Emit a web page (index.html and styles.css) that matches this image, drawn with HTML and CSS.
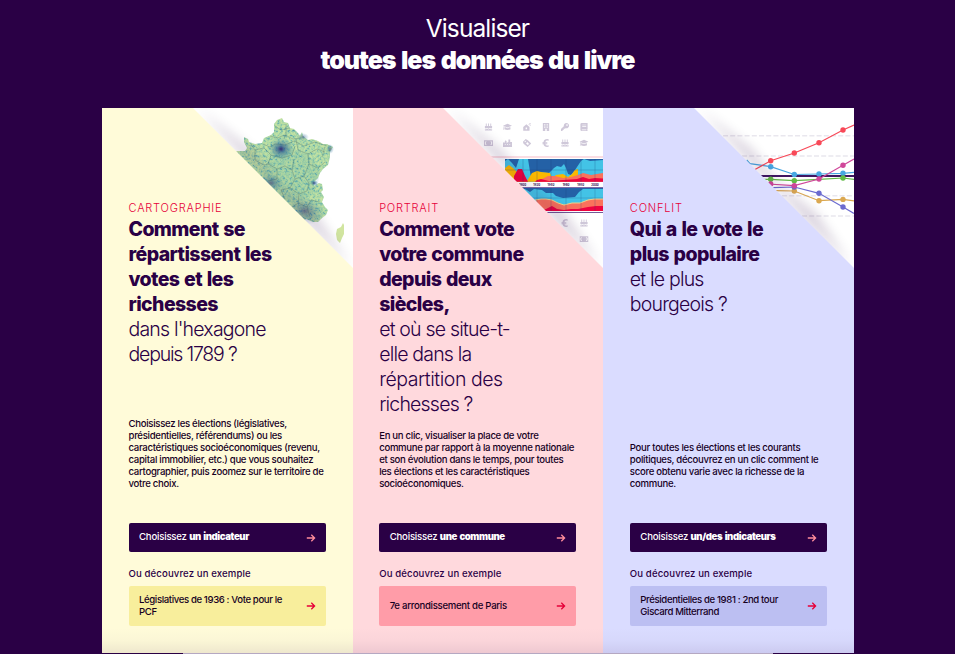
FILE: index.html
```html
<!DOCTYPE html>
<html lang="fr">
<head>
<meta charset="utf-8">
<title>Visualiser toutes les données du livre</title>
<link rel="stylesheet" href="styles.css">
</head>
<body>
<svg class="defs" width="0" height="0" aria-hidden="true">
  <defs>
    <filter id="blur" x="-30%" y="-30%" width="160%" height="160%"><feGaussianBlur stdDeviation="6"/></filter>
    <filter id="density" x="0" y="0" width="100%" height="100%" color-interpolation-filters="sRGB">
      <feTurbulence type="fractalNoise" baseFrequency="0.4" numOctaves="3" seed="7" result="n"/>
      <feColorMatrix in="n" type="matrix" values="1.5 0 0 0 -0.1  1.5 0 0 0 -0.1  1.5 0 0 0 -0.1  0 0 0 0 1"/>
      <feComponentTransfer result="c">
        <feFuncR type="table" tableValues="0.28 0.42 0.62 0.72 0.78"/>
        <feFuncG type="table" tableValues="0.54 0.70 0.82 0.87 0.89"/>
        <feFuncB type="table" tableValues="0.66 0.68 0.66 0.64 0.64"/>
      </feComponentTransfer>
      <feComposite in="c" in2="SourceGraphic" operator="in"/>
    </filter>
    <radialGradient id="city"><stop offset="0" stop-color="#352a75"/><stop offset=".3" stop-color="#2f5b92" stop-opacity=".7"/><stop offset="1" stop-color="#3b8aa3" stop-opacity="0"/></radialGradient>
    <symbol id="cake" viewBox="0 0 10 10"><path d="M2 1h1v3H2zM4.500 1h1v3h-1zM7 1h1v3H7zM1 4h8v2.200l-1 .6-1.500-.8L5 7l-1.500-1L2 6.800l-1-.6zM1 7.300l1 .4 1.500-.8L5 7.900l1.500-1 1.500.8 1-.4V9H1z"/></symbol>
    <symbol id="cap" viewBox="0 0 10 10"><path d="M5 1.500l5 2-5 2-5-2zM2 5l3 1.300L8 5l.4 2.500Q5 9 1.600 7.500zM.8 3.800h.6L1.200 8H.4z"/></symbol>
    <symbol id="house" viewBox="0 0 10 10"><path fill-rule="evenodd" d="M.8 5l3.500-3 3.500 3v4.200H.8zM3.500 5.500v2h1.600v-2zM9.500.7Q7.500.4 7.300 2T9.500 3.600V3Q8.200 3 8.200 2t1.300-.7zM6.600 1.600h2.200v.5H6.600z"/></symbol>
    <symbol id="tower" viewBox="0 0 10 10"><path fill-rule="evenodd" d="M1.500.5h7v9h-7zM3 2v1.300h1.300V2zM5.700 2v1.300H7V2zM3 4.500v1.300h1.300V4.500zM5.700 4.500v1.300H7V4.500zM4.200 7v2.500h1.600V7z"/></symbol>
    <symbol id="key" viewBox="0 0 10 10"><path fill-rule="evenodd" d="M6.500.5a3 3 0 1 1-1 5.800L4.600 7H3.500v1.200H2.300v1.300H.5V7.300l3.200-3.200A3 3 0 0 1 6.500.5zM7.200 2a.8.8 0 1 0 .1 0z"/></symbol>
    <symbol id="book" viewBox="0 0 10 10"><path fill-rule="evenodd" d="M2.500.5H9v7.300H8.500v.9H9v.8H2.500Q1 9.500 1 8V2Q1 .5 2.500.5zM3 2.500v.6h4.500v-.6zM3 4v.6h4.500V4zM2.600 7.800v.8h5v-.8z"/></symbol>
    <symbol id="cash" viewBox="0 0 10 10"><path fill-rule="evenodd" d="M0 2h10v6.200H0zM3 3H1.800Q1.700 3.700 1 3.800v2.500q.7.100.8.900H3A2.600 2.600 0 0 1 3 3zM7 3a2.600 2.600 0 0 1 0 4.200h1.200q.1-.8.8-.9V3.800Q8.300 3.700 8.200 3z"/></symbol>
    <symbol id="city-block" viewBox="0 0 10 10"><path fill-rule="evenodd" d="M0 5l1-1 1 1V3l1-1 1 1v2l2-1V1h2v3h2v5.500H0zM2 6v1h1V6zM4.500 6v1h1V6zM7 6v1h1V6z"/></symbol>
    <symbol id="tag" viewBox="0 0 10 10"><path fill-rule="evenodd" d="M.5 3.500L3.500.5 6 2l3.700 3.500-4 4L2.500 7 1 5.500zM3 2.500a.7.7 0 1 0 .1 0zM5.300 4L4 5.500l1.800 1.800L7.300 6z"/></symbol>
    <symbol id="euro" viewBox="0 0 10 10"><path d="M8.500.8v1.700Q5.500 1.600 4.900 3.800H7v1H4.700v.6H7v1H4.900Q5.500 8.500 8.500 7.600v1.700Q3.500 10.200 2.800 6.400H1.600v-1h1v-.6h-1v-1h1.200Q3.500 0 8.500.8z"/></symbol>
    <symbol id="arrow" viewBox="0 0 10 10"><path d="M.8 5h7.800M5.300 1.700L8.600 5 5.300 8.300" fill="none" stroke="currentColor" stroke-width="1.300"/></symbol>
  </defs>
</svg>

<header class="hero">
  <h1><span class="hero-light">Visualiser</span><strong class="hero-bold">toutes les données du livre</strong></h1>
</header>

<main class="cards">
  <article class="card card-map">
    <svg class="art" viewBox="0 0 160 160">
      <rect width="160" height="160" fill="#fff"/>
      <path filter="url(#density)" d="M51 29L55 31 56 34 62 36 69 35 71 30 78 27 81 24 81 16 84 12 89 10 91 14 95 15 97 20 101 21 105 25 107 28 109 24 110 28 115 32 119 31 125 33 130 36 134 36 140 39 137 44 137 49 135 57 130 61 127 65 125 70 121 74 121 78 126 75 129 76 130 82 128 84 131 89 129 94 132 99 135 102 133 107 129 110 125 114 120 114 113 111 106 116 36 46 44 43 52 43 54 40 51 34z"/>
      <ellipse cx="88" cy="41" rx="13" ry="11" fill="url(#city)"/>
      <ellipse cx="78" cy="75" rx="12" ry="9" fill="url(#city)" opacity=".6"/>
      <ellipse cx="112" cy="103" rx="20" ry="14" fill="url(#city)" opacity=".5"/>
      <ellipse cx="121" cy="75" rx="4" ry="3" fill="url(#city)"/>
      <ellipse cx="137" cy="41" rx="4" ry="5" fill="url(#city)" opacity=".6"/>
      <ellipse cx="110" cy="29" rx="6" ry="4" fill="url(#city)" opacity=".5"/>
      <ellipse cx="98" cy="68" rx="28" ry="26" fill="#3b8fa0" opacity=".13"/>
      <path fill="none" stroke="#395f62" stroke-width=".5" opacity=".6" d="M82 18l6 4 9-2M77 28l7 2 8-3 8 4 8-1M93 16v10l-2 5M70 36l7 3 5-3 10 1 9-4 10 5 11-4 12 4M58 36l4 6 9-2 7 7 11 3 10-3 3-9M103 31l2 11 10 4 9-5 8 3M78 47l-3 9 9 5 8-3 7 4 2-11M115 46l1 10 9 4 7-6M62 42v10l9 5 4-1M84 61v10l-9 2M99 62l3 9 9-3 5-12M102 71l-5 9 9 6 8-3 2-8-5-7M97 80l-9 2 4 9M106 86l-1 9 9 4 4-7 9 2M105 95l-7 5M114 99l3 10M132 39l-3 10"/>
      <path fill="#d1e5a0" d="M150 115L151 117V126L149 130 147 135 144 132 143 126 144 121 148 119z"/>
      <path class="fold-shadow" d="M5 1L58 42 84 76 122 106 158 160z"/>
      <path fill="#fffbd9" d="M0 0l160 160H0z"/>
    </svg>
    <p class="tag">CARTOGRAPHIE</p>
    <h2 class="title"><strong>Comment se<br>répartissent les<br>votes et les<br>richesses</strong><span>dans l'hexagone<br><i class="condensed">depuis 1789 ?</i></span></h2>
    <p class="desc">Choisissez les élections (législatives,<br>présidentielles, référendums) ou les<br>caractéristiques socioéconomiques (revenu,<br>capital immobilier, etc.) que vous souhaitez<br>cartographier, puis zoomez sur le territoire de<br>votre choix.</p>
    <a class="btn"><span>Choisissez <b>un indicateur</b></span><svg class="arrow"><use href="#arrow"/></svg></a>
    <p class="or">Ou découvrez un exemple</p>
    <a class="example"><span>Législatives de 1936 : Vote pour le<br>PCF</span><svg class="arrow"><use href="#arrow"/></svg></a>
  </article>

  <article class="card card-town">
    <svg class="art" viewBox="0 0 160 160">
      <rect width="160" height="160" fill="#fff"/>
      <g fill="#cfc8d9">
        <use href="#cake" x="41" y="14.500" width="9" height="9"/><use href="#cap" x="60" y="14.500" width="9" height="9"/><use href="#house" x="79.500" y="14.500" width="9" height="9"/><use href="#tower" x="98.500" y="14.500" width="9" height="9"/><use href="#key" x="117.500" y="14.500" width="9" height="9"/><use href="#book" x="136.500" y="14.500" width="9" height="9"/>
        <use href="#cash" x="41" y="30.500" width="9" height="9"/><use href="#city-block" x="60" y="30.500" width="9" height="9"/><use href="#tag" x="79.500" y="30.500" width="9" height="9"/><use href="#euro" x="98" y="30.500" width="9" height="9"/><use href="#cake" x="117.500" y="30.500" width="9" height="9"/><use href="#cap" x="136.500" y="30.500" width="9" height="9"/>
        <use href="#euro" x="117" y="110.500" width="9" height="9"/><use href="#cake" x="136.500" y="110.500" width="9" height="9"/><use href="#cash" x="136.500" y="126.500" width="9" height="9"/>
      </g>
      <path fill="#fbdde2" d="M48 48h112v2H48z"/>
      <path fill="#2461a6" d="M62 51h98v22.700H62z"/>
      <path fill="#43c3e6" d="M62 53L65 51 69 55 73 60 76 51H85L88 70 94 64 106 65 111 60 114 58 118 59 121 56 123 60 125 66 128 67 132 62 138 53 141 51 147 53 160 52V73.700H62z"/>
      <path fill="#fbb800" d="M62 60L66 57 70 60 74 64 80 69 84 73 89 65 94 63 98 64 107 65 109 70 113 67 120 66 125 69 129 66 132 62 135 61V67L125 73.700H62z"/>
      <path fill="#fa725c" d="M91 73.700L99 71 105 68 112 68 120 70 128 69 135 67 140 65 148 67 160 65V73.700H91z"/>
      <path fill="#ee0340" d="M71 68L75 61 79 61 82 68 85 73.700H71zM92 73.700L94 72 98 71 102 72 106 73 120 72 134 71 140 69 146 71 152 70 160 70.500V73.700z"/>
      <path stroke="#193a75" stroke-width=".5" opacity=".5" d="M80 51v23M94 51v23M108 51v23M123 51v23M138 51v23M152 51v23M62 62h98"/>
      <path fill="#7d68a8" d="M70 79h90v1H70z"/>
      <g class="years"><text x="79.700" y="77.500">1900</text><text x="93.700" y="77.500">1920</text><text x="108" y="77.500">1940</text><text x="123" y="77.500">1960</text><text x="137.700" y="77.500">1980</text><text x="152" y="77.500">2000</text></g>
      <path fill="#2461a6" d="M75 80h85v23H75z"/>
      <path fill="#43c3e6" d="M75 81L82 81 87 84 91 81 99 82 103 85 110 85 113 88 120 90 132 89 136 84 140 81H160V103H75z"/>
      <path fill="#fa725c" d="M93 92L98 91 103 91 109 92 115 95 121 97 129 95 137 95 145 92 151 91 160 91V103H95z"/>
      <path fill="none" stroke="#eed38b" d="M92 92L98 91 103 91 109 92 115 95 121 97 129 95 137 95 145 92 151 91 160 91"/>
      <path fill="#ee0340" d="M97 103L103 101 109 98 114 101 121 102 128 101 135 101 145 99 153 98 160 98V103z"/>
      <path stroke="#193a75" stroke-width=".5" opacity=".45" d="M94 80v23M108 80v23M123 80v23M138 80v23M152 80v23M75 90h85"/>
      <path fill="#735997" d="M100 104h60v1h-60z"/>
      <path class="fold-shadow" d="M5 1L58 42 84 76 122 106 158 160z"/>
      <path fill="#ffd9dd" d="M0 0l160 160H0z"/>
    </svg>
    <p class="tag">PORTRAIT</p>
    <h2 class="title"><strong>Comment vote<br>votre commune<br>depuis deux<br>siècles,</strong><span>et où se situe-t-<br>elle dans la<br><i class="roomy">répartition des</i><br>richesses ?</span></h2>
    <p class="desc">En un clic, visualiser la place de votre<br>commune par rapport à la moyenne nationale<br>et son évolution dans le temps, pour toutes<br>les élections et les caractéristiques<br>socioéconomiques.</p>
    <a class="btn"><span>Choisissez <b>une commune</b></span><svg class="arrow"><use href="#arrow"/></svg></a>
    <p class="or">Ou découvrez un exemple</p>
    <a class="example"><span class="short">7e arrondissement de Paris</span><svg class="arrow"><use href="#arrow"/></svg></a>
  </article>

  <article class="card card-vote">
    <svg class="art" viewBox="0 0 160 160">
      <rect width="160" height="160" fill="#fff"/>
      <path stroke="#e9e7ee" stroke-width="1.500" stroke-dasharray="5 2.200" d="M29 27.700h131M48 48h112M88 87.700h72M108 108h52"/>
      <path stroke="#401762" stroke-width="2" d="M66 68h94"/>
      <g fill="none" stroke-width="1.200">
        <path stroke="#dba850" d="M82 82.600L100.300 83 125 92.700 149 91.400 160 92.800"/>
        <path stroke="#6b6bd0" d="M79 79.600L100.300 79 125 85.300 149 99 160 105.500"/>
        <path stroke="#47a7e2" d="M52.700 52L56 55.700 76.700 58.700 100.300 66.500 125 66 149 65.300 160 64.400"/>
        <path stroke="#62bb46" d="M70 71.300h6.700L100.300 72.700 125 71.300 149 70 160 71.400"/>
        <path stroke="#d0479a" d="M74 76L100.300 77.700 125 71 149 57.300 160 51"/>
        <path stroke="#f84958" d="M61 61.500L76.700 52.700 100.300 45 125 34.700 149 22 160 17"/>
      </g>
      <g fill="#dba850"><circle cx="100.300" cy="83" r="2.700"/><circle cx="125" cy="92.700" r="2.700"/><circle cx="149" cy="91.400" r="2.700"/></g>
      <g fill="#6b6bd0"><circle cx="100.300" cy="79" r="2.700"/><circle cx="125" cy="85.300" r="2.700"/><circle cx="149" cy="99" r="2.700"/></g>
      <g fill="#47a7e2"><circle cx="76.700" cy="58.700" r="2.700"/><circle cx="100.300" cy="66.500" r="2.700"/><circle cx="125" cy="66" r="2.700"/><circle cx="149" cy="65.300" r="2.700"/></g>
      <g fill="#62bb46"><circle cx="76.700" cy="71.300" r="2.700"/><circle cx="100.300" cy="72.700" r="2.700"/><circle cx="149" cy="70" r="2.700"/></g>
      <g fill="#d0479a"><circle cx="76.700" cy="76" r="2.700"/><circle cx="100.300" cy="77.700" r="2.700"/><circle cx="125" cy="71" r="2.700"/><circle cx="149" cy="57.300" r="2.700"/></g>
      <g fill="#f84958"><circle cx="76.700" cy="52.700" r="2.700"/><circle cx="100.300" cy="45" r="2.700"/><circle cx="125" cy="34.700" r="2.700"/><circle cx="149" cy="22" r="2.700"/></g>
      <path class="fold-shadow" d="M5 1L58 42 84 76 122 106 158 160z"/>
      <path fill="#dadcff" d="M0 0l160 160H0z"/>
    </svg>
    <p class="tag">CONFLIT</p>
    <h2 class="title"><strong>Qui a le vote le<br>plus populaire</strong><span>et le plus<br>bourgeois ?</span></h2>
    <p class="desc">Pour toutes les élections et les courants<br>politiques, découvrez en un clic comment le<br>score obtenu varie avec la richesse de la<br>commune.</p>
    <a class="btn"><span>Choisissez <b>un/des indicateurs</b></span><svg class="arrow"><use href="#arrow"/></svg></a>
    <p class="or">Ou découvrez un exemple</p>
    <a class="example"><span>Présidentielles de 1981 : 2nd tour<br>Giscard Mitterrand</span><svg class="arrow"><use href="#arrow"/></svg></a>
  </article>
</main>
<div class="sheet-edge"></div>
</body>
</html>
```
FILE: styles.css
```css
* { box-sizing: border-box; }
body { margin: 0; height: 654px; overflow: hidden; background: #2a0045; color: #2a0045; font-family: Inter, "Open Sans", sans-serif; }
h1, h2, p { margin: 0; font-weight: inherit; }
i { font-style: normal; }
.defs { position: absolute; }
.hero { height: 108px; padding-top: 12px; color: #fff; text-align: center; }
.hero h1 { font-size: 25px; line-height: 32px; }
.hero-light, .hero-bold { display: block; }
.hero-light { font-size: 24.500px; font-weight: 400; letter-spacing: -.9px; }
.hero-bold { font-weight: 900; letter-spacing: -1.050px; word-spacing: 1.600px; }
.cards { display: grid; grid-template-columns: repeat(3, minmax(0, 1fr)); width: 752px; height: 545px; margin-left: 102px; }
.card { position: relative; display: flex; flex-direction: column; padding: 93px 27px 27px 26.500px; }
.card::after { content: ""; position: absolute; left: 0; right: 0; bottom: 0; height: 25px; background: linear-gradient(rgba(42,0,69,0), rgba(42,0,69,.02) 50%, rgba(42,0,69,.08)); }
.card-map { background: #fffbd9; }
.card-town { background: #ffd9dd; }
.card-vote { background: #dadcff; }
.art { position: absolute; top: 0; right: 0; width: 160px; height: 160px; }
.fold-shadow { fill: #2a0045; opacity: .2; filter: url(#blur); }
.years text { font-size: 2.800px; font-weight: 700; text-anchor: middle; fill: #2a0045; }
.tag, .title { position: relative; }
.tag { height: 16px; font-size: 11px; line-height: 14px; font-weight: 350; letter-spacing: .8px; color: #e60039; }
.title { font-size: 20px; line-height: 25px; white-space: nowrap; }
.title strong, .title span { display: block; }
.title strong { font-size: 19.500px; font-weight: 800; letter-spacing: -.6px; word-spacing: 1px; }
.title span { font-size: 19.500px; font-weight: 350; letter-spacing: -.8px; }
.title .condensed { letter-spacing: -1.200px; }
.title .roomy { letter-spacing: -.45px; }
.desc { margin-top: auto; font-size: 9.600px; line-height: 12px; font-weight: 500; letter-spacing: -.3px; color: #16001f; white-space: nowrap; }
.btn, .example { display: flex; align-items: center; justify-content: space-between; padding: 0 10px 0 10.500px; border-radius: 2px; font-size: 9.600px; line-height: 12px; font-weight: 500; letter-spacing: -.2px; white-space: nowrap; }
.btn { height: 29px; margin-top: 33px; background: #2a0045; color: #fff; }
.btn span { padding-bottom: 1px; }
.btn b { font-weight: 900; letter-spacing: -.4px; word-spacing: 1px; }
.btn .arrow { color: #ff8c9b; }
.or { height: 34px; padding-top: 16px; font-size: 9.600px; line-height: 12px; font-weight: 500; letter-spacing: .12px; }
.example { height: 40px; letter-spacing: -.38px; color: #16001f; }
.example .short { letter-spacing: -.29px; }
.card-map .example { background: #f8ee9c; }
.card-town .example { background: #ff9ca8; }
.card-vote .example { background: #bcbff2; }
.arrow { width: 10px; height: 10px; color: #e60039; }
.sheet-edge { width: 590px; height: 1px; margin-left: 183px; background: #b5a8c2; }
```
